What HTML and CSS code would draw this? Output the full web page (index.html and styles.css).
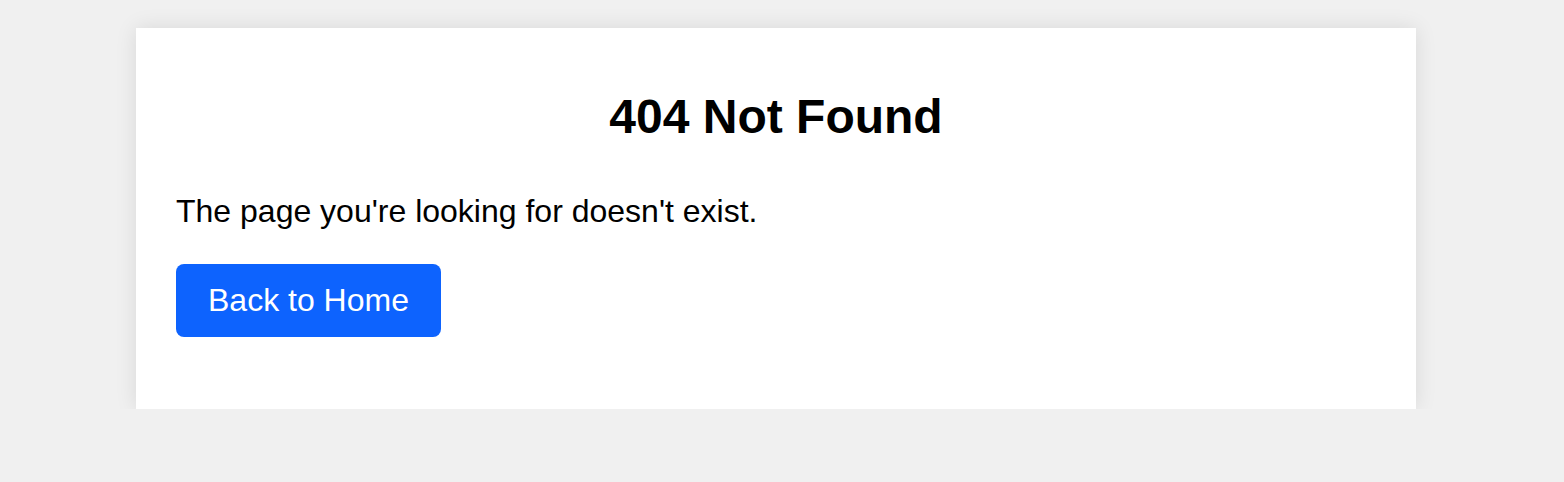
FILE: index.html
```html
<!DOCTYPE html>
<html lang="en">
<head>
<meta charset="utf-8">
<title>404 Not Found</title>
<link rel="stylesheet" href="styles.css">
</head>
<body>
<main class="card">
  <h1 class="title">404 Not Found</h1>
  <p class="message">The page you're looking for doesn't exist.</p>
  <div class="actions">
    <a class="btn" href="#">Back to Home</a>
  </div>
</main>
</body>
</html>
```

FILE: styles.css
```css
html, body {
  margin: 0;
  padding: 0;
}
body {
  background: #f0f0f0;
  font-family: "Liberation Sans", Arial, sans-serif;
  color: #000;
  padding: 28px 12px 0 0;
}
.card {
  display: block;
  width: 1280px;
  box-sizing: border-box;
  margin: 0 auto;
  background: #fff;
  padding: 40px;
  box-shadow: 0 0 20px rgba(0, 0, 0, 0.1);
}
.title {
  margin: 21px 0 49px;
  font-size: 48px;
  font-weight: bold;
  text-align: center;
}
.message {
  margin: 0 0 34px;
  font-size: 32px;
}
.actions {
  margin-bottom: 32px;
}
.btn {
  display: inline-block;
  background: #0d63fe;
  color: #fff;
  text-decoration: none;
  font-size: 32px;
  line-height: 37px;
  padding: 18px 32px;
  border-radius: 8px;
}
```
